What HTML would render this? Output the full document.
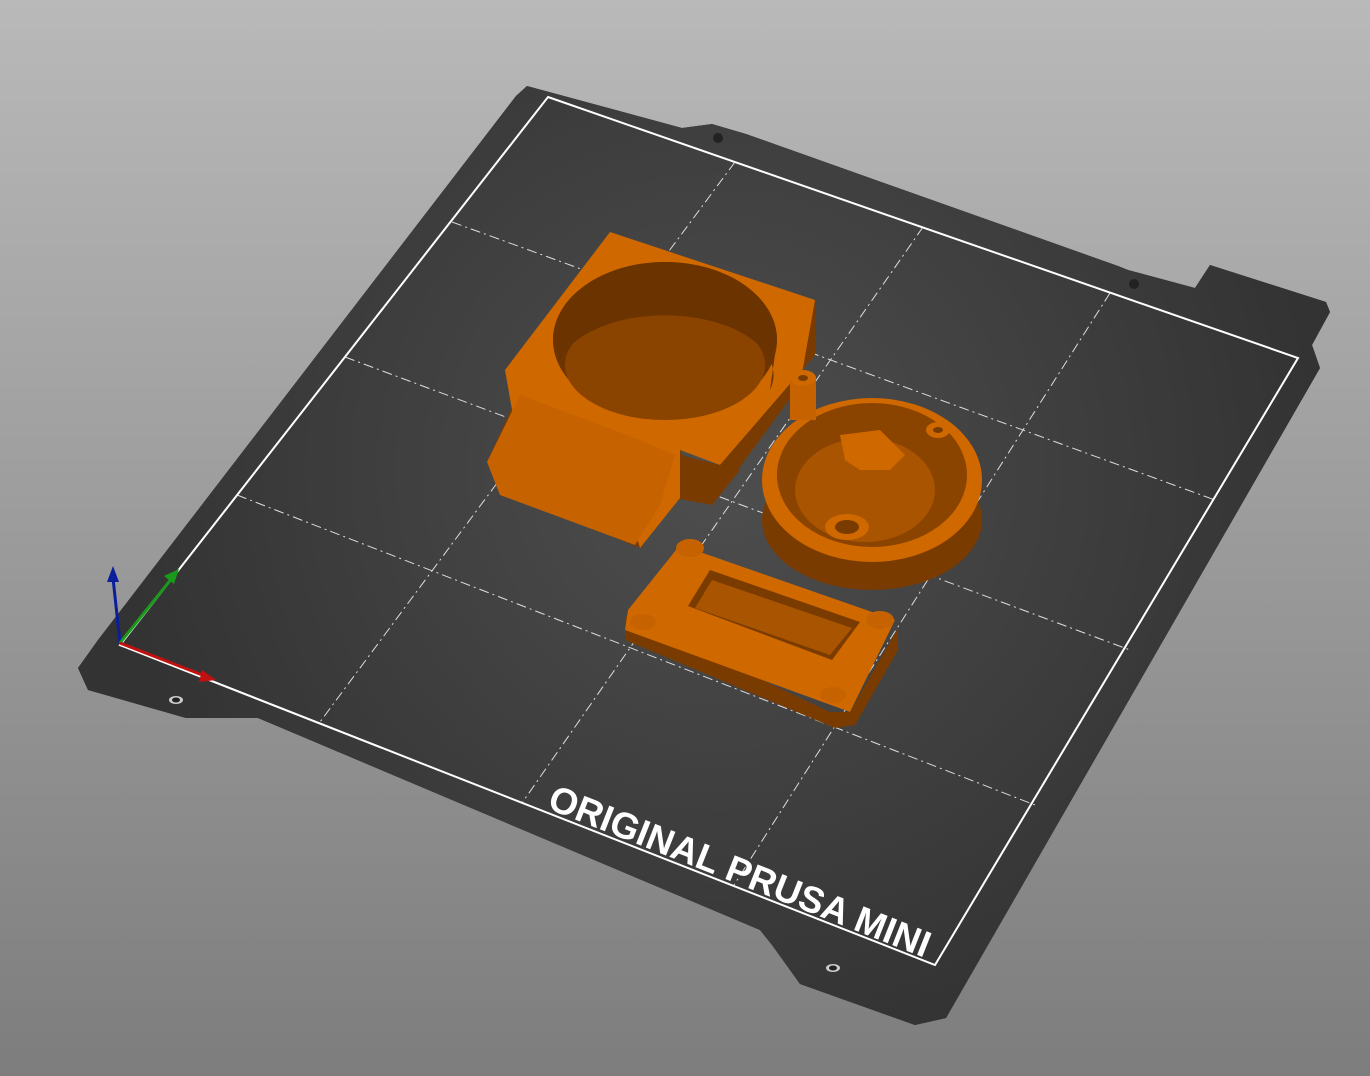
<!DOCTYPE html>
<html><head><style>
html,body{margin:0;padding:0;width:1370px;height:1076px;overflow:hidden;background:linear-gradient(#b9b9b9,#7d7d7d);}
svg{position:absolute;left:0;top:0}
</style></head><body>
<svg width="1370" height="1076" viewBox="0 0 1370 1076">
<defs>
<radialGradient id="bed" cx="720" cy="470" r="600" gradientUnits="userSpaceOnUse">
<stop offset="0" stop-color="#4e4e4e"/><stop offset="1" stop-color="#333"/></radialGradient>
</defs>
<polygon fill="#2c2c2c" points="527,86 682,128 712,124 746,134 1118,266 1128,270 1195,288 1210,265 1326,302 1330,312 1312,345 1320,368 946,1018 915,1025 800,984 772,945 760,930 258,718 186,718 88,690 78,668 98,640 516,96"/>
<polygon fill="url(#bed)" points="527,86 682,128 712,124 746,134 1118,266 1128,270 1195,288 1210,265 1326,302 1330,312 1312,345 1320,368 946,1018 915,1025 800,984 772,945 760,930 258,718 186,718 88,690 78,668 98,640 516,96"/>
<circle cx="718" cy="138" r="5" fill="#222"/><circle cx="1134" cy="284" r="5" fill="#222"/>
<ellipse cx="176" cy="700" rx="7" ry="4" fill="#ccc"/><ellipse cx="176" cy="700" rx="4" ry="2.5" fill="#222"/>
<ellipse cx="833" cy="968" rx="7" ry="4" fill="#ccc"/><ellipse cx="833" cy="968" rx="4" ry="2.5" fill="#222"/>
<g stroke="#ddd" stroke-width="1" stroke-dasharray="10,4,2,4" fill="none">
<line x1="735" y1="162" x2="320" y2="722"/>
<line x1="923" y1="227" x2="522" y2="803"/>
<line x1="1110" y1="293" x2="734" y2="885"/>
<line x1="452" y1="222" x2="1215" y2="500"/>
<line x1="345" y1="357" x2="1130" y2="650"/>
<line x1="237" y1="495" x2="1035" y2="805"/>
</g>
<polygon points="548,97 1298,358 935,965 120,645" fill="none" stroke="#fff" stroke-width="2"/>
<text x="0" y="0" transform="translate(546,808) rotate(21.6)" font-family="Liberation Sans, sans-serif" font-weight="bold" font-size="37" fill="#fff">ORIGINAL PRUSA MINI</text>
<!-- axes -->
<line x1="120" y1="643" x2="113" y2="578" stroke="#0a1e9a" stroke-width="3"/>
<polygon points="113,566 107,582 119,582" fill="#0a1e9a"/>
<line x1="120" y1="643" x2="172" y2="578" stroke="#1a9a1a" stroke-width="3"/>
<polygon points="179,569 164,576 174,584" fill="#1a9a1a"/>
<line x1="120" y1="643" x2="205" y2="676" stroke="#c01010" stroke-width="3"/>
<polygon points="216,680 202,670 199,682" fill="#c01010"/>
<!-- fan duct -->
<polygon fill="#7a3b00" points="487,462 520,390 680,450 712,505 674,498 640,548 500,490"/>
<polygon fill="#d06800" points="505,370 610,232 815,300 815,355 720,465 680,450 680,498 640,548 630,515 520,455"/>
<polygon fill="#7a3b00" points="720,465 815,355 815,300 800,385 712,505"/>
<polygon fill="#c66200" points="487,462 520,395 640,440 675,455 660,505 635,545 500,495"/>
<polygon fill="#7a3b00" points="680,455 712,505 740,470 720,465"/>
<ellipse cx="665" cy="340" rx="112" ry="78" fill="#6e3500"/>
<ellipse cx="665" cy="365" rx="100" ry="55" fill="#8a4400"/>
<path d="M553,340 A112,78 0 0 1 777,340 L770,390 A100,55 0 0 0 560,360 Z" fill="#6a3300"/>
<!-- round part -->
<ellipse cx="872" cy="520" rx="110" ry="70" fill="#7a3b00"/>
<ellipse cx="872" cy="480" rx="110" ry="82" fill="#d06800"/>
<ellipse cx="872" cy="475" rx="95" ry="72" fill="#8a4400"/>
<ellipse cx="865" cy="490" rx="70" ry="52" fill="#a85400"/>
<polygon fill="#d06800" points="840,435 880,430 905,455 890,470 860,470 845,460"/>
<ellipse cx="847" cy="527" rx="22" ry="13" fill="#d06800"/>
<ellipse cx="847" cy="527" rx="12" ry="7" fill="#7a3b00"/>
<rect x="790" y="378" width="26" height="42" fill="#c66200"/>
<ellipse cx="803" cy="378" rx="13" ry="8" fill="#d06800"/><ellipse cx="803" cy="378" rx="5" ry="3" fill="#7a3b00"/>
<ellipse cx="938" cy="430" rx="12" ry="8" fill="#d06800"/><ellipse cx="938" cy="430" rx="5" ry="3" fill="#7a3b00"/>
<!-- frame -->
<polygon fill="#7a3b00" points="625,615 625,640 835,728 855,725 898,650 898,628 850,712 830,712"/>
<polygon fill="#d06800" points="680,545 895,620 850,712 625,630 628,610"/>
<polygon fill="#7a3b00" points="710,570 860,622 832,660 688,606"/>
<polygon fill="#a85400" points="712,580 852,628 830,655 695,608"/>
<ellipse cx="690" cy="548" rx="14" ry="9" fill="#c66200"/>
<ellipse cx="880" cy="620" rx="14" ry="9" fill="#c66200"/>
<ellipse cx="643" cy="622" rx="13" ry="8" fill="#c66200"/>
<ellipse cx="833" cy="695" rx="13" ry="8" fill="#c66200"/>
</svg>
</body></html>
